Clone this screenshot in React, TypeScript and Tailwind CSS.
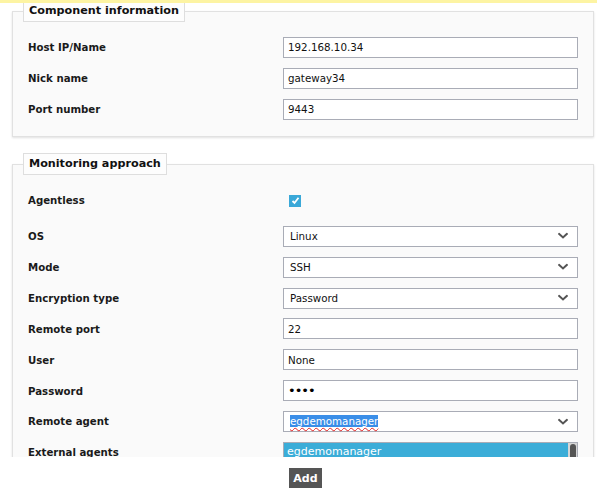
import React from "react";

const font = { fontFamily: '"DejaVu Sans", Verdana, sans-serif' };

function Chevron() {
  return (
    <svg width="10" height="7" viewBox="0 0 10 7" className="absolute right-[9px] top-1/2 -translate-y-1/2">
      <path d="M1.2 1.5 L5 5 L8.8 1.5" fill="none" stroke="#555" strokeWidth="2" strokeLinecap="square" />
    </svg>
  );
}

function Label({ children }: { children: React.ReactNode }) {
  return <div className="text-[10.2px] font-bold text-[#1a1a1a] leading-none pt-[2px]">{children}</div>;
}

function TextBox({ value, dots }: { value: string; dots?: boolean }) {
  return (
    <div className="h-[21px] w-[295px] border border-[#a9acb6] bg-white flex items-center pl-[4px]">
      {dots ? (
        <span className="text-[13px] leading-none text-black tracking-[-1px]">••••</span>
      ) : (
        <span className="text-[10.3px] leading-none text-[#111]">{value}</span>
      )}
    </div>
  );
}

function SelectBox({ children }: { children: React.ReactNode }) {
  return (
    <div className="relative h-[21px] w-[295px] border border-[#a9acb6] bg-white flex items-center pl-[6px]">
      <span className="text-[10.3px] leading-none text-[#111]">{children}</span>
      <Chevron />
    </div>
  );
}

function Row({ label, children, className = "" }: { label: string; children: React.ReactNode; className?: string }) {
  return (
    <div className={"flex items-center h-[21px] " + className}>
      <div className="w-[255px]">
        <Label>{label}</Label>
      </div>
      {children}
    </div>
  );
}

function Legend({ children }: { children: React.ReactNode }) {
  return (
    <legend className="ml-[-5px] h-[22px] px-[5px] border border-[#dedede] bg-[#fdfdfd] flex items-center text-[11.2px] font-bold text-[#111] leading-none">
      {children}
    </legend>
  );
}

export default function App() {
  return (
    <div className="relative w-[597px] h-[491px] bg-white overflow-hidden" style={font}>
      <div className="absolute top-0 left-0 right-0 h-[3px] bg-[#fdf4a3] z-10" />
      <div className="h-[457px] overflow-hidden px-[12px] pr-[4px]">
        <fieldset className="border border-[#e1e1e1] bg-[#fafafa] shadow-[0_1px_2px_rgba(0,0,0,0.12)] px-[15px] pt-[15px] pb-[16px]">
          <Legend>Component information</Legend>
          <div className="flex flex-col gap-[10px]">
            <Row label="Host IP/Name">
              <TextBox value="192.168.10.34" />
            </Row>
            <Row label="Nick name">
              <TextBox value="gateway34" />
            </Row>
            <Row label="Port number">
              <TextBox value="9443" />
            </Row>
          </div>
        </fieldset>

        <fieldset className="mt-[16px] border border-[#e1e1e1] bg-[#fafafa] shadow-[0_1px_2px_rgba(0,0,0,0.12)] px-[15px] pt-[15px] pb-[16px]">
          <Legend>Monitoring approach</Legend>
          <div className="flex flex-col gap-[9.86px]">
            <Row label="Agentless" className="mb-[5px]">
              <div className="ml-[6px] w-[12px] h-[12px] bg-[#3aa8d8] flex items-center justify-center">
                <svg width="9" height="9" viewBox="0 0 9 9">
                  <path d="M1.5 5 L3.5 7 L7.5 1.8" fill="none" stroke="white" strokeWidth="1.8" />
                </svg>
              </div>
            </Row>
            <Row label="OS">
              <SelectBox>Linux</SelectBox>
            </Row>
            <Row label="Mode">
              <SelectBox>SSH</SelectBox>
            </Row>
            <Row label="Encryption type">
              <SelectBox>Password</SelectBox>
            </Row>
            <Row label="Remote port">
              <TextBox value="22" />
            </Row>
            <Row label="User">
              <TextBox value="None" />
            </Row>
            <Row label="Password">
              <TextBox value="" dots />
            </Row>
            <Row label="Remote agent">
              <SelectBox>
                <span className="bg-[#3a8ee8] text-white underline decoration-wavy decoration-[#e02020] decoration-1 underline-offset-[2px]">
                  egdemomanager
                </span>
              </SelectBox>
            </Row>
            <div className="flex items-start">
              <div className="w-[255px] pt-[4px]">
                <Label>External agents</Label>
              </div>
              <div className="w-[295px] h-[60px] border border-[#a9acb6] bg-white flex">
                <div className="flex-1 flex flex-col">
                  <div className="h-[17px] bg-[#3badd8] flex items-center pl-[3px] text-[11px] leading-none text-white">
                    egdemomanager
                  </div>
                </div>
                <div className="w-[9px] bg-[#d6d6d6] flex justify-center pt-[1px]">
                  <div className="w-[6px] h-[30px] bg-[#555] rounded-[3px]" />
                </div>
              </div>
            </div>
          </div>
        </fieldset>
      </div>
      <div className="flex pl-[289px] pt-[11px]">
        <button className="h-[20px] w-[33px] bg-[#555555] text-white text-[11px] font-bold leading-none flex items-center justify-center">
          Add
        </button>
      </div>
    </div>
  );
}
